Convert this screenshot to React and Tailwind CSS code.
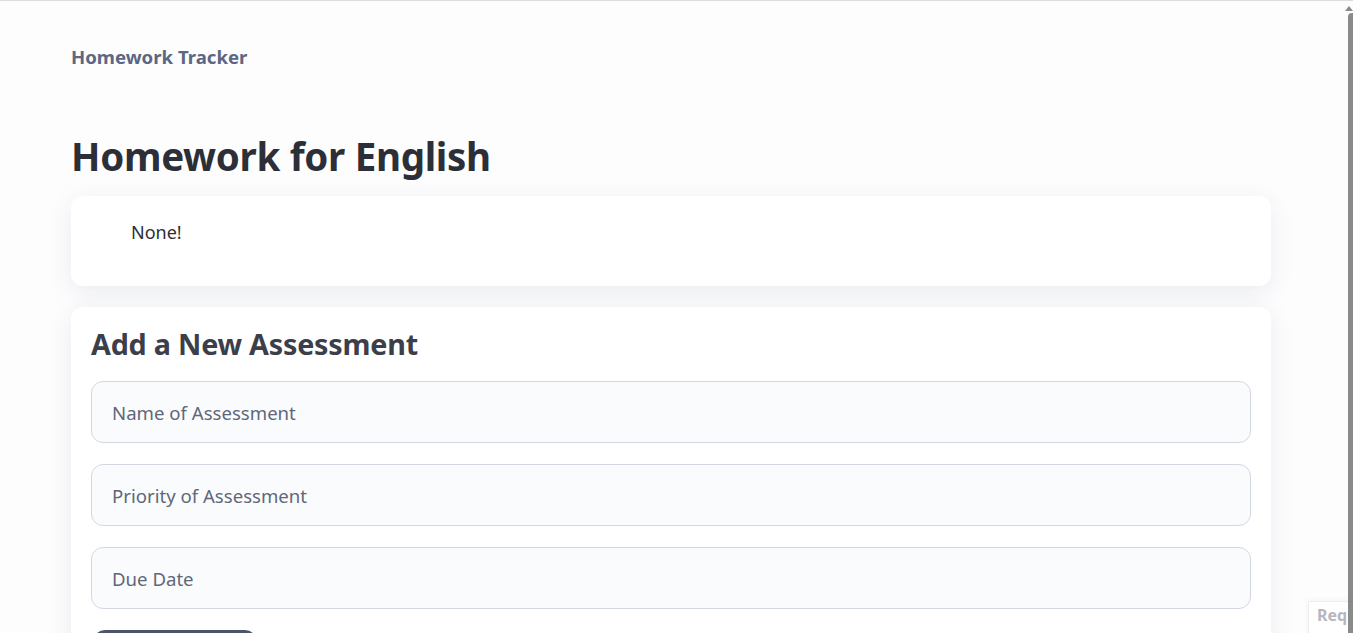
import React from 'react';

const fields = ['Name of Assessment', 'Priority of Assessment', 'Due Date'];

export default function App() {
    return (
        <div className="relative h-[633px] overflow-hidden bg-[#fdfdfe] font-['Noto_Sans','Open_Sans',sans-serif] border-t border-[#dcdcdc]">
            <div className="ml-[71px] w-[1200px]">
                <div className="pt-[43px] text-[18.6px] font-bold text-[#5b6784] leading-[26px]">Homework Tracker</div>
                <h1 className="mt-[61px] text-[38.5px] font-bold leading-[50px] text-[#2c2f37] tracking-[-0.3px]">Homework for English</h1>
                <div className="mt-[15px] h-[90px] rounded-xl bg-white shadow-[0_6px_24px_rgba(40,50,90,0.09)] px-5 pt-[23px]">
                    <ul className="pl-10">
                        <li className="text-[18px] leading-[26px] text-[#2e2f33]">None!</li>
                    </ul>
                </div>
                <div className="mt-[21px] rounded-xl bg-white shadow-[0_6px_24px_rgba(40,50,90,0.09)] px-5 pt-[19px] pb-5">
                    <h2 className="text-[28.7px] font-bold leading-[36px] text-[#3c3f4a] tracking-[-0.2px]">Add a New Assessment</h2>
                    <div className="mt-[19px] flex flex-col gap-[21px]">
                        {fields.map((f) => (
                            <input
                                key={f}
                                placeholder={f}
                                className="h-[62px] w-full rounded-xl border border-[#d3d7e3] bg-[#fafbfc] px-5 text-[18.6px] text-[#2e2f33] placeholder:text-[#5f677a] outline-none"
                            />
                        ))}
                    </div>
                    <button className="mt-[21px] ml-[2px] h-[48px] w-[164px] rounded-xl bg-[#4c5568] pt-[12px] text-white text-[16px] font-bold">Add</button>
                </div>
            </div>
            <div className="absolute left-[1308px] top-[600px] w-[45px] h-[40px] bg-white border border-[#eceef2] shadow-[0_0_6px_rgba(0,0,0,0.06)] pl-[8px] pt-[1px] text-[16px] font-bold text-[#b4b7be] leading-[24px] overflow-hidden whitespace-nowrap">Req</div>
            <div className="absolute right-0 top-[12px] bottom-0 w-[5px] bg-[#8a8a8a] rounded-tl-sm" />
            <div className="absolute right-[0px] top-[5px] w-0 h-0 border-l-[4px] border-r-[4px] border-b-[5px] border-l-transparent border-r-transparent border-b-[#8a8a8a]" />
        </div>
    );
}
